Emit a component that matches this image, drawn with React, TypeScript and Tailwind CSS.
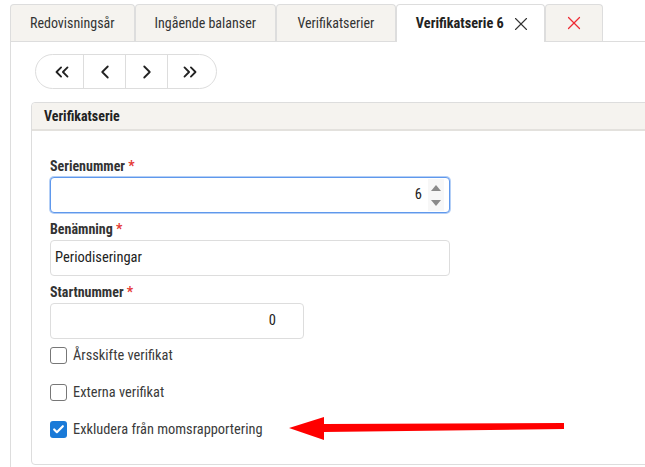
import { ChevronLeft, ChevronRight, ChevronsLeft, ChevronsRight, X, Check } from "lucide-react";

const font = "font-['Roboto_Condensed',Roboto,'Liberation_Sans',sans-serif] font-stretch-condensed";

function Tab({ label, active, closable, pad = "px-[19px]" }: { label: string; active?: boolean; closable?: boolean; pad?: string }) {
  return (
    <div
      className={
        active
          ? "-mb-px flex h-[38px] items-center gap-[6px] rounded-t-[4px] border border-b-0 border-[#dddddd] bg-white pl-[19px] pr-[12px] text-[14.3px] font-bold text-[#222]"
          : "flex h-[37px] items-center rounded-t-[4px] border border-b-0 border-[#dddddd] bg-[#f5f3ef] text-[14px] text-[#333] " + pad
      }
    >
      {label}
      {closable && <X className="h-[22px] w-[22px] text-[#333]" strokeWidth={1.2} />}
    </div>
  );
}

function Field({ label, value, width, focused, spinner }: { label: string; value: string; width: string; focused?: boolean; spinner?: boolean }) {
  return (
    <div className="mb-[7px]">
      <div className="mb-[2px] h-[18px] text-[14px] font-bold leading-[18px] text-[#333]">
        {label} <span className="text-[#e53935]">*</span>
      </div>
      <div
        className={
          (focused
            ? "border-[#5f98ec] shadow-[0_0_0_1px_#b4cff6] "
            : "border-[#dddddd] ") +
          width +
          " flex h-[36px] items-center rounded-[4px] border bg-white text-[14.5px] text-[#222]"
        }
      >
        {spinner ? (
          <>
            <div className="flex-1 pr-[6px] text-right">{value}</div>
            <div className="mr-[5px] flex h-[32px] w-[16px] flex-col items-center justify-center gap-[9px] bg-[#f7f7f7]">
              <div className="h-0 w-0 border-x-[5px] border-b-[6px] border-x-transparent border-b-[#8a8a8a]" />
              <div className="h-0 w-0 border-x-[5px] border-t-[6px] border-x-transparent border-t-[#8a8a8a]" />
            </div>
          </>
        ) : value === "0" ? (
          <div className="flex-1 pr-[27px] text-right">{value}</div>
        ) : (
          <div className="flex-1 pl-[4px]">{value}</div>
        )}
      </div>
    </div>
  );
}

function CheckRow({ label, checked }: { label: string; checked?: boolean }) {
  return (
    <div className="flex h-[37px] items-center gap-[6px]">
      {checked ? (
        <div className="flex h-[17px] w-[17px] items-center justify-center rounded-[3px] bg-[#1a7ad8]">
          <Check className="h-[13px] w-[13px] text-white" strokeWidth={4} />
        </div>
      ) : (
        <div className="h-[17px] w-[17px] rounded-[3px] border border-[#777] bg-white" />
      )}
      <span className="text-[14.4px] text-[#3a3a3a]">{label}</span>
    </div>
  );
}

export default function App() {
  return (
    <div className={"relative h-[467px] w-[645px] overflow-hidden bg-white " + font}>
      {/* Tabs */}
      <div className="ml-[10px] flex items-end border-b border-[#dddddd] pt-[4px]">
        <Tab label="Redovisningsår" />
        <Tab label="Ingående balanser" />
        <Tab label="Verifikatserier" pad="px-[20.5px]" />
        <Tab label="Verifikatserie 6" active closable />
        <div className="flex h-[37px] w-[58px] items-center justify-center rounded-t-[4px] border border-b-0 border-[#dddddd] bg-[#f5f3ef]">
          <X className="h-[22px] w-[22px] text-[#ef2b34]" strokeWidth={1.3} />
        </div>
      </div>

      <div className="ml-[10px] h-[430px] border-l border-[#dddddd] pl-[20px] pt-[12px]">
        {/* Pager */}
        <div className="ml-[4px] flex h-[35px] w-[182px] items-center rounded-full border border-[#dddddd] text-[#222]">
          <div className="flex h-full w-[48px] items-center justify-center border-r border-[#dddddd] pl-[4px]">
            <ChevronsLeft className="h-[22px] w-[22px]" strokeWidth={2} />
          </div>
          <div className="flex h-full w-[42px] items-center justify-center border-r border-[#dddddd]">
            <ChevronLeft className="h-[22px] w-[22px]" strokeWidth={2} />
          </div>
          <div className="flex h-full w-[42px] items-center justify-center border-r border-[#dddddd]">
            <ChevronRight className="h-[22px] w-[22px]" strokeWidth={2} />
          </div>
          <div className="flex h-full flex-1 items-center justify-center pr-[4px]">
            <ChevronsRight className="h-[22px] w-[22px]" strokeWidth={2} />
          </div>
        </div>

        {/* Panel */}
        <div className="mt-[13px] w-[640px] rounded-[4px] border border-[#dddddd]">
          <div className="flex h-[28px] items-center rounded-t-[4px] border-b-2 border-[#e3e1dd] bg-[#f5f3ef] pl-[12px] text-[14px] font-bold text-[#222]">
            Verifikatserie
          </div>
          <div className="pb-[16px] pl-[18px] pt-[26px]">
            <Field label="Serienummer" value="6" width="w-[400px]" focused spinner />
            <Field label="Benämning" value="Periodiseringar" width="w-[400px]" />
            <Field label="Startnummer" value="0" width="w-[254px]" />
            <div className="-mt-[9px]">
              <CheckRow label="Årsskifte verifikat" />
              <CheckRow label="Externa verifikat" />
              <CheckRow label="Exkludera från momsrapportering" checked />
            </div>
          </div>
        </div>
      </div>

      {/* Annotation arrow */}
      <svg className="absolute left-[288px] top-[415px]" width="280" height="27" viewBox="0 0 280 27">
        <polygon points="1,13 36,2 36,9 276,8 276,14 36,17 36,25" fill="#ff0000" />
      </svg>
    </div>
  );
}
